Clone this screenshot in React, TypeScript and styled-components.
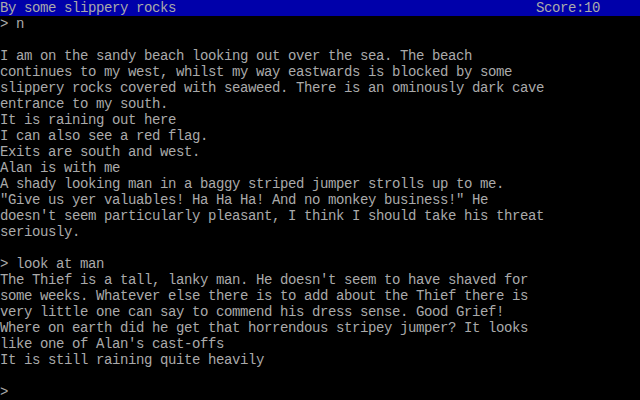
import React from "react";
import styled, { createGlobalStyle } from "styled-components";

const GlobalStyle = createGlobalStyle`
  html, body {
    margin: 0;
    padding: 0;
    background: #000000;
  }
`;

const Screen = styled.div`
  width: 640px;
  height: 400px;
  overflow: hidden;
  background: #000000;
  color: #aaaaaa;
  font-family: "Liberation Mono", "DejaVu Sans Mono", monospace;
  font-size: 14px;
  letter-spacing: -0.4px;
  line-height: 16px;
  display: flex;
  flex-direction: column;
`;

const StatusBar = styled.div`
  height: 16px;
  background: #0000aa;
  display: flex;
  justify-content: space-between;
  padding-right: 40px;
  white-space: pre;
`;

const Transcript = styled.div`
  display: flex;
  flex-direction: column;
`;

const Line = styled.div`
  height: 16px;
  white-space: pre;
`;

const transcript = [
  "> n",
  "",
  "I am on the sandy beach looking out over the sea. The beach",
  "continues to my west, whilst my way eastwards is blocked by some",
  "slippery rocks covered with seaweed. There is an ominously dark cave",
  "entrance to my south.",
  "It is raining out here",
  "I can also see a red flag.",
  "Exits are south and west.",
  "Alan is with me",
  "A shady looking man in a baggy striped jumper strolls up to me.",
  "\"Give us yer valuables! Ha Ha Ha! And no monkey business!\" He",
  "doesn't seem particularly pleasant, I think I should take his threat",
  "seriously.",
  "",
  "> look at man",
  "The Thief is a tall, lanky man. He doesn't seem to have shaved for",
  "some weeks. Whatever else there is to add about the Thief there is",
  "very little one can say to commend his dress sense. Good Grief!",
  "Where on earth did he get that horrendous stripey jumper? It looks",
  "like one of Alan's cast-offs",
  "It is still raining quite heavily",
  "",
  ">",
];

export default function App() {
  return (
    <>
      <GlobalStyle />
      <Screen>
        <StatusBar>
          <span>By some slippery rocks</span>
          <span>Score:10</span>
        </StatusBar>
        <Transcript>
          {transcript.map((text, i) => (
            <Line key={i}>{text}</Line>
          ))}
        </Transcript>
      </Screen>
    </>
  );
}
